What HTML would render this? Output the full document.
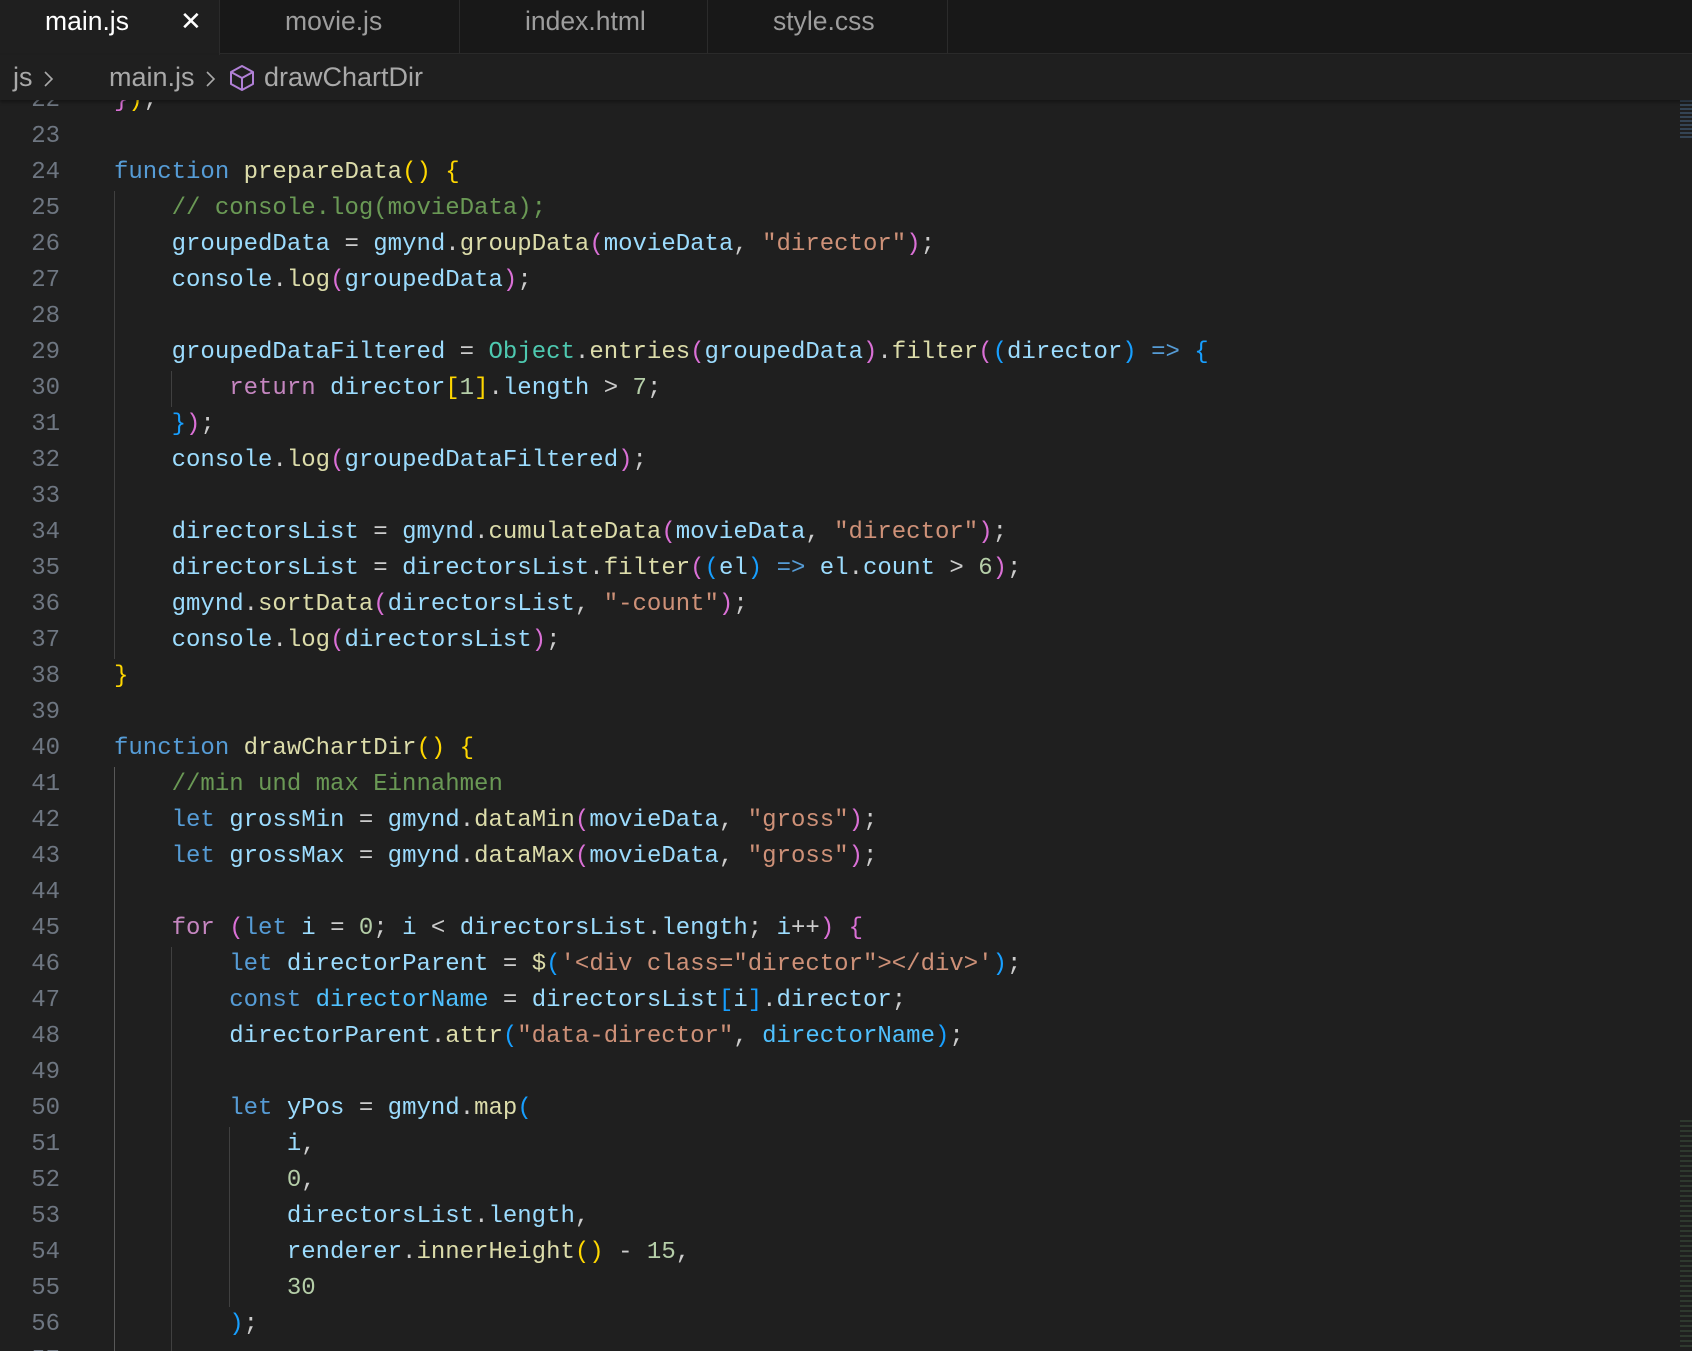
<!DOCTYPE html>
<html><head><meta charset="utf-8"><style>
html,body{margin:0;padding:0;width:1692px;height:1351px;overflow:hidden;background:#1f1f1f}
.tabs{position:absolute;left:0;top:0;width:1692px;height:54px;background:#181818;border-bottom:1px solid #2b2b2b;box-sizing:border-box}
.tab{position:absolute;top:0;height:54px;font:26.5px "Liberation Sans",sans-serif;color:#9d9d9d;line-height:42px;border-right:1px solid #2b2b2b;box-sizing:border-box}
.tab.active{background:#1f1f1f;color:#fff;height:55px}
.crumb{position:absolute;left:0;top:55px;width:1692px;height:45px;background:#1f1f1f;font:27px "Liberation Sans",sans-serif;color:#a9a9a9;z-index:2;box-shadow:0 2px 3px rgba(0,0,0,.35)}
.crumb span{position:absolute;top:4px;line-height:36px}
.ed{position:absolute;left:0;top:100px;width:1692px;height:1251px;overflow:hidden}
.code{position:absolute;left:0;top:-17px;font:24px "Liberation Mono",monospace}
.l{height:36px;line-height:36px;white-space:pre;position:relative}
.n{position:absolute;left:0;width:60px;text-align:right;color:#6e7681}
.t{position:absolute;left:114px;color:#cccccc}
.g{position:absolute;top:0;width:1px;height:36px;background:#404040}
.k{color:#569cd6}.f{color:#dcdcaa}.v{color:#9cdcfe}.s{color:#ce9178}.c{color:#6a9955}.u{color:#b5cea8}.p{color:#c586c0}.o{color:#4ec9b0}.y{color:#ffd700}.m{color:#da70d6}.b{color:#179fff}.cn{color:#4fc1ff}.w{color:#d4d4d4}
</style></head><body>
<div class="tabs">
<div class="tab active" style="left:0;width:220px"><span style="position:absolute;left:45px;top:0">main.js</span><span style="position:absolute;left:180px;top:0;font-size:26px">✕</span></div>
<div class="tab" style="left:220px;width:240px"><span style="position:absolute;left:65px">movie.js</span></div>
<div class="tab" style="left:460px;width:248px"><span style="position:absolute;left:65px">index.html</span></div>
<div class="tab" style="left:708px;width:240px"><span style="position:absolute;left:65px">style.css</span></div>
</div>
<div class="crumb">
<span style="left:13px">js</span>
<svg style="position:absolute;left:43px;top:15px" width="12" height="18" viewBox="0 0 12 18"><path d="M2 2 L9 9 L2 16" fill="none" stroke="#a9a9a9" stroke-width="1.6"/></svg>
<span style="left:109px">main.js</span>
<svg style="position:absolute;left:205px;top:15px" width="12" height="18" viewBox="0 0 12 18"><path d="M2 2 L9 9 L2 16" fill="none" stroke="#a9a9a9" stroke-width="1.6"/></svg>
<svg style="position:absolute;left:229px;top:9px" width="26" height="28" viewBox="0 0 26 28"><path d="M13 2 L24 8 L24 20 L13 26 L2 20 L2 8 Z M2 8 L13 14 L24 8 M13 14 L13 26" fill="none" stroke="#b180d7" stroke-width="2" stroke-linejoin="round"/></svg>
<span style="left:264px">drawChartDir</span>
</div>
<div class="ed"><div class="code">
<div class="l"><span class="n">22</span><span class="t"><span class="m">}</span><span class="y">)</span>;</span></div>
<div class="l"><span class="n">23</span></div>
<div class="l"><span class="n">24</span><span class="t"><span class="k">function</span> <span class="f">prepareData</span><span class="y">()</span> <span class="y">{</span></span></div>
<div class="l"><span class="g" style="left:114px"></span><span class="n">25</span><span class="t">    <span class="c">// console.log(movieData);</span></span></div>
<div class="l"><span class="g" style="left:114px"></span><span class="n">26</span><span class="t">    <span class="v">groupedData</span> = <span class="v">gmynd</span>.<span class="f">groupData</span><span class="m">(</span><span class="v">movieData</span>, <span class="s">"director"</span><span class="m">)</span>;</span></div>
<div class="l"><span class="g" style="left:114px"></span><span class="n">27</span><span class="t">    <span class="v">console</span>.<span class="f">log</span><span class="m">(</span><span class="v">groupedData</span><span class="m">)</span>;</span></div>
<div class="l"><span class="g" style="left:114px"></span><span class="n">28</span></div>
<div class="l"><span class="g" style="left:114px"></span><span class="n">29</span><span class="t">    <span class="v">groupedDataFiltered</span> = <span class="o">Object</span>.<span class="f">entries</span><span class="m">(</span><span class="v">groupedData</span><span class="m">)</span>.<span class="f">filter</span><span class="m">(</span><span class="b">(</span><span class="v">director</span><span class="b">)</span> <span class="k">=&gt;</span> <span class="b">{</span></span></div>
<div class="l"><span class="g" style="left:114px"></span><span class="g" style="left:171px"></span><span class="n">30</span><span class="t">        <span class="p">return</span> <span class="v">director</span><span class="y">[</span><span class="u">1</span><span class="y">]</span>.<span class="v">length</span> &gt; <span class="u">7</span>;</span></div>
<div class="l"><span class="g" style="left:114px"></span><span class="n">31</span><span class="t">    <span class="b">}</span><span class="m">)</span>;</span></div>
<div class="l"><span class="g" style="left:114px"></span><span class="n">32</span><span class="t">    <span class="v">console</span>.<span class="f">log</span><span class="m">(</span><span class="v">groupedDataFiltered</span><span class="m">)</span>;</span></div>
<div class="l"><span class="g" style="left:114px"></span><span class="n">33</span></div>
<div class="l"><span class="g" style="left:114px"></span><span class="n">34</span><span class="t">    <span class="v">directorsList</span> = <span class="v">gmynd</span>.<span class="f">cumulateData</span><span class="m">(</span><span class="v">movieData</span>, <span class="s">"director"</span><span class="m">)</span>;</span></div>
<div class="l"><span class="g" style="left:114px"></span><span class="n">35</span><span class="t">    <span class="v">directorsList</span> = <span class="v">directorsList</span>.<span class="f">filter</span><span class="m">(</span><span class="b">(</span><span class="v">el</span><span class="b">)</span> <span class="k">=&gt;</span> <span class="v">el</span>.<span class="v">count</span> &gt; <span class="u">6</span><span class="m">)</span>;</span></div>
<div class="l"><span class="g" style="left:114px"></span><span class="n">36</span><span class="t">    <span class="v">gmynd</span>.<span class="f">sortData</span><span class="m">(</span><span class="v">directorsList</span>, <span class="s">"-count"</span><span class="m">)</span>;</span></div>
<div class="l"><span class="g" style="left:114px"></span><span class="n">37</span><span class="t">    <span class="v">console</span>.<span class="f">log</span><span class="m">(</span><span class="v">directorsList</span><span class="m">)</span>;</span></div>
<div class="l"><span class="n">38</span><span class="t"><span class="y">}</span></span></div>
<div class="l"><span class="n">39</span></div>
<div class="l"><span class="n">40</span><span class="t"><span class="k">function</span> <span class="f">drawChartDir</span><span class="y">()</span> <span class="y">{</span></span></div>
<div class="l"><span class="g" style="left:114px;background:#585858"></span><span class="n">41</span><span class="t">    <span class="c">//min und max Einnahmen</span></span></div>
<div class="l"><span class="g" style="left:114px;background:#585858"></span><span class="n">42</span><span class="t">    <span class="k">let</span> <span class="v">grossMin</span> = <span class="v">gmynd</span>.<span class="f">dataMin</span><span class="m">(</span><span class="v">movieData</span>, <span class="s">"gross"</span><span class="m">)</span>;</span></div>
<div class="l"><span class="g" style="left:114px;background:#585858"></span><span class="n">43</span><span class="t">    <span class="k">let</span> <span class="v">grossMax</span> = <span class="v">gmynd</span>.<span class="f">dataMax</span><span class="m">(</span><span class="v">movieData</span>, <span class="s">"gross"</span><span class="m">)</span>;</span></div>
<div class="l"><span class="g" style="left:114px;background:#585858"></span><span class="n">44</span></div>
<div class="l"><span class="g" style="left:114px;background:#585858"></span><span class="n">45</span><span class="t">    <span class="p">for</span> <span class="m">(</span><span class="k">let</span> <span class="v">i</span> = <span class="u">0</span>; <span class="v">i</span> &lt; <span class="v">directorsList</span>.<span class="v">length</span>; <span class="v">i</span>++<span class="m">)</span> <span class="m">{</span></span></div>
<div class="l"><span class="g" style="left:114px;background:#585858"></span><span class="g" style="left:171px"></span><span class="n">46</span><span class="t">        <span class="k">let</span> <span class="v">directorParent</span> = <span class="f">$</span><span class="b">(</span><span class="s">'&lt;div class="director"&gt;&lt;/div&gt;'</span><span class="b">)</span>;</span></div>
<div class="l"><span class="g" style="left:114px;background:#585858"></span><span class="g" style="left:171px"></span><span class="n">47</span><span class="t">        <span class="k">const</span> <span class="cn">directorName</span> = <span class="v">directorsList</span><span class="b">[</span><span class="v">i</span><span class="b">]</span>.<span class="v">director</span>;</span></div>
<div class="l"><span class="g" style="left:114px;background:#585858"></span><span class="g" style="left:171px"></span><span class="n">48</span><span class="t">        <span class="v">directorParent</span>.<span class="f">attr</span><span class="b">(</span><span class="s">"data-director"</span>, <span class="cn">directorName</span><span class="b">)</span>;</span></div>
<div class="l"><span class="g" style="left:114px;background:#585858"></span><span class="g" style="left:171px"></span><span class="n">49</span></div>
<div class="l"><span class="g" style="left:114px;background:#585858"></span><span class="g" style="left:171px"></span><span class="n">50</span><span class="t">        <span class="k">let</span> <span class="v">yPos</span> = <span class="v">gmynd</span>.<span class="f">map</span><span class="b">(</span></span></div>
<div class="l"><span class="g" style="left:114px;background:#585858"></span><span class="g" style="left:171px"></span><span class="g" style="left:229px"></span><span class="n">51</span><span class="t">            <span class="v">i</span>,</span></div>
<div class="l"><span class="g" style="left:114px;background:#585858"></span><span class="g" style="left:171px"></span><span class="g" style="left:229px"></span><span class="n">52</span><span class="t">            <span class="u">0</span>,</span></div>
<div class="l"><span class="g" style="left:114px;background:#585858"></span><span class="g" style="left:171px"></span><span class="g" style="left:229px"></span><span class="n">53</span><span class="t">            <span class="v">directorsList</span>.<span class="v">length</span>,</span></div>
<div class="l"><span class="g" style="left:114px;background:#585858"></span><span class="g" style="left:171px"></span><span class="g" style="left:229px"></span><span class="n">54</span><span class="t">            <span class="v">renderer</span>.<span class="f">innerHeight</span><span class="y">()</span> - <span class="u">15</span>,</span></div>
<div class="l"><span class="g" style="left:114px;background:#585858"></span><span class="g" style="left:171px"></span><span class="g" style="left:229px"></span><span class="n">55</span><span class="t">            <span class="u">30</span></span></div>
<div class="l"><span class="g" style="left:114px;background:#585858"></span><span class="g" style="left:171px"></span><span class="n">56</span><span class="t">        <span class="b">)</span>;</span></div>
<div class="l"><span class="g" style="left:114px;background:#585858"></span><span class="g" style="left:171px"></span><span class="n">57</span></div>
</div>
<div style="position:absolute;left:1680px;top:0;width:12px;height:40px;background:repeating-linear-gradient(#4a6a8a 0 2px,transparent 2px 4px);opacity:.5"></div>
<div style="position:absolute;left:1680px;top:1020px;width:12px;height:230px;background:repeating-linear-gradient(#4a6a4a 0 2px,transparent 2px 5px);opacity:.35"></div>
</div>
</body></html>
